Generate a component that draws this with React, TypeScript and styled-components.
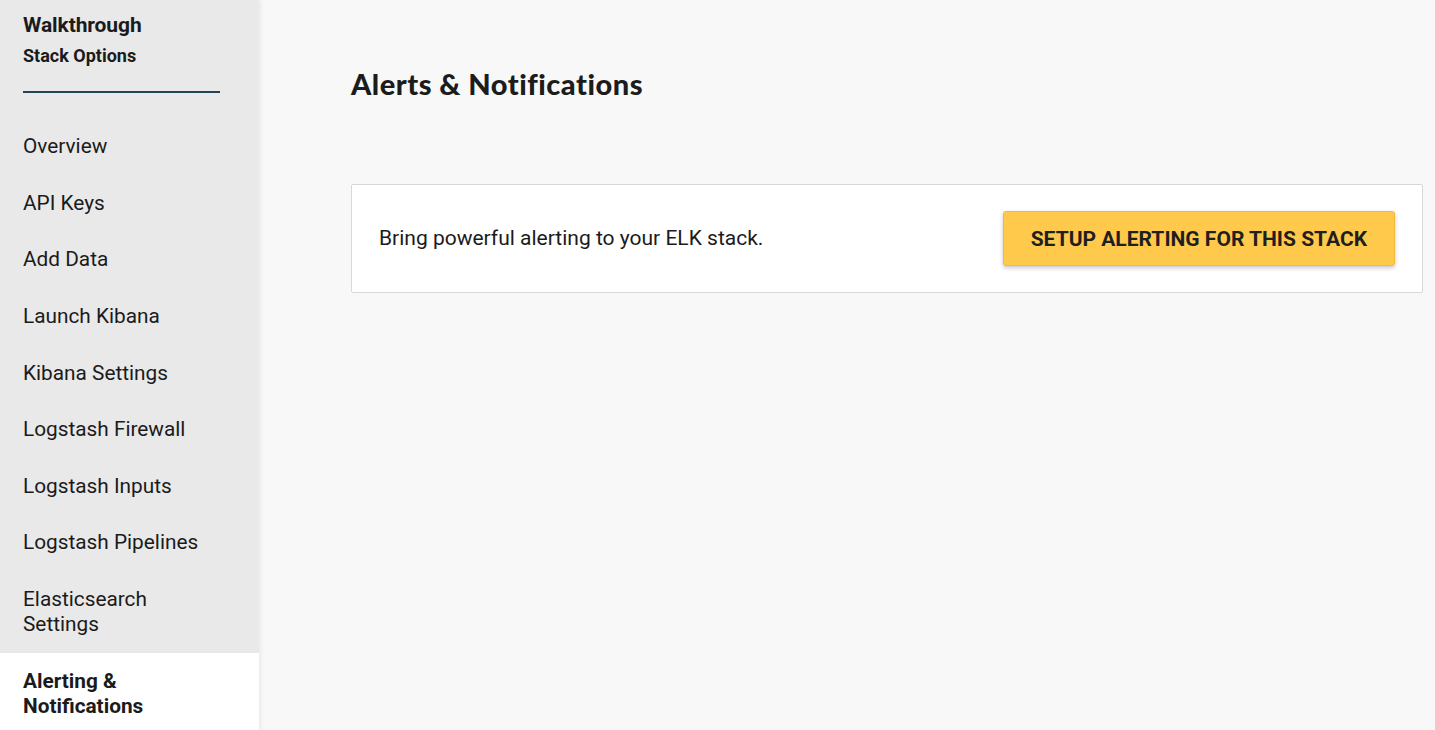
import styled, { createGlobalStyle } from 'styled-components';

const GlobalStyle = createGlobalStyle`
    html, body {
        margin: 0;
        padding: 0;
        height: 100%;
        background: #f8f8f8;
        font-family: Roboto, "Liberation Sans", sans-serif;
        color: #1b1b1b;
    }
    #root {
        height: 100%;
    }
`;

const menu = [
    'Overview',
    'API Keys',
    'Add Data',
    'Launch Kibana',
    'Kibana Settings',
    'Logstash Firewall',
    'Logstash Inputs',
    'Logstash Pipelines',
    'Elasticsearch Settings',
    'Alerting & Notifications'
];

// styled components
const Layout = styled('div')({
    display: 'flex',
    height: '730px',
    overflow: 'hidden'
});

const Sidebar = styled('nav')({
    width: '259px',
    flexShrink: 0,
    background: '#e9e9e9',
    boxShadow: '2px 0 4px rgba(0, 0, 0, 0.06)',
    position: 'relative',
    zIndex: 1,
    paddingTop: '13px'
});

const SideHeader = styled('div')({
    padding: '0 23px'
});

const SideTitle = styled('div')({
    fontSize: '21px',
    fontWeight: 700,
    lineHeight: '25px',
    letterSpacing: '-0.1px'
});

const SideSubtitle = styled('div')({
    fontSize: '18px',
    fontWeight: 700,
    lineHeight: '25px',
    marginTop: '5px'
});

const Rule = styled('div')({
    height: '1.5px',
    background: '#1f4556',
    width: '197px',
    marginTop: '23px',
    marginBottom: '26px'
});

const MenuItem = styled('div')<{ $active?: boolean }>(({ $active }) => ({
    padding: '15.8px 40px 15.8px 23px',
    fontSize: '20.8px',
    lineHeight: '25px',
    fontWeight: $active ? 700 : 400,
    background: $active ? '#ffffff' : 'transparent',
    color: '#1b1b1b'
}));

const Main = styled('main')({
    flex: 1,
    padding: '67px 12px 0 92px'
});

const PageTitle = styled('h1')({
    margin: 0,
    fontFamily: 'Lato, "Noto Sans", sans-serif',
    fontWeight: 900,
    fontSize: '29px',
    lineHeight: '34px',
    color: '#1c1c1c',
    letterSpacing: '0.5px'
});

const Card = styled('div')({
    marginTop: '83px',
    height: '109px',
    boxSizing: 'border-box',
    background: '#ffffff',
    border: '1px solid #d8d8d8',
    borderRadius: '2px',
    display: 'flex',
    alignItems: 'center',
    justifyContent: 'space-between',
    padding: '0 27px'
});

const CardText = styled('p')({
    margin: 0,
    fontSize: '21px',
    lineHeight: '25px'
});

const SetupButton = styled('button')({
    height: '55px',
    padding: '0 27px',
    background: '#ffc94b',
    border: '1px solid #efb93c',
    borderRadius: '3px',
    boxShadow: '0 2px 4px rgba(0, 0, 0, 0.22)',
    fontFamily: 'Roboto, "Liberation Sans", sans-serif',
    fontSize: '21px',
    fontWeight: 700,
    color: '#1f1f1f',
    textTransform: 'uppercase',
    cursor: 'pointer'
});

const App = (): JSX.Element => {
    return (
        <>
            <GlobalStyle />
            <Layout>
                <Sidebar>
                    <SideHeader>
                        <SideTitle>Walkthrough</SideTitle>
                        <SideSubtitle>Stack Options</SideSubtitle>
                        <Rule />
                    </SideHeader>
                    {menu.map((name, index) => (
                        <MenuItem key={name} $active={index === menu.length - 1}>
                            {name}
                        </MenuItem>
                    ))}
                </Sidebar>
                <Main>
                    <PageTitle>Alerts &amp; Notifications</PageTitle>
                    <Card>
                        <CardText>Bring powerful alerting to your ELK stack.</CardText>
                        <SetupButton>Setup alerting for this stack</SetupButton>
                    </Card>
                </Main>
            </Layout>
        </>
    );
};

export default App;
